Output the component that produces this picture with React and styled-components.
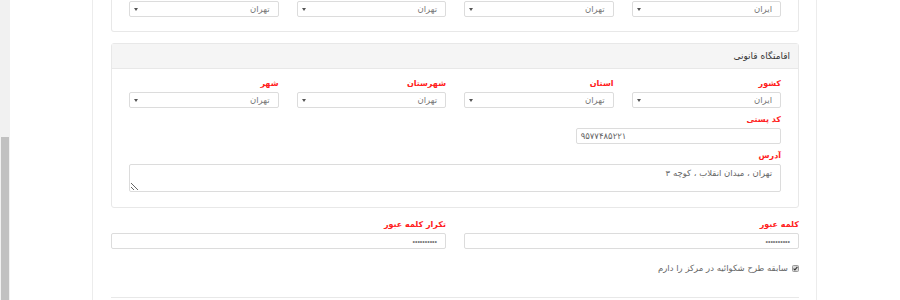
import styled, { createGlobalStyle } from "styled-components";

const GlobalStyle = createGlobalStyle`
  html, body {
    margin: 0;
    padding: 0;
    height: 100%;
    overflow: hidden;
    background: #fff;
  }
  body {
    font-family: "DejaVu Sans", "Noto Sans", sans-serif;
  }
`;

const Shell = styled.div`
  display: flex;
  height: 100vh;
`;

// fake scrollbar on the left side (rtl page)
const ScrollTrack = styled.div`
  width: 10px;
  background: #f1f1f1;
  padding: 0 1px;
  box-sizing: border-box;
  display: flex;
  flex-direction: column;
`;

const Thumb = styled.div`
  margin-top: 137px;
  flex: 1;
  background: #c1c1c1;
`;

const Main = styled.div`
  flex: 1;
  padding-left: 82px;
`;

const Container = styled.div`
  width: 725px;
  height: 100%;
  box-sizing: border-box;
  border-left: 1px solid #ececec;
  border-right: 1px solid #ececec;
  padding: 0 17px 0 18px;
  direction: rtl;
`;

const CutPanel = styled.div`
  border: 1px solid #e8e8e8;
  border-top: none;
  border-radius: 0 0 3px 3px;
  padding: 1px 17px 14px;
`;

const Panel = styled.div`
  margin-top: 11px;
  border: 1px solid #e8e8e8;
  border-radius: 3px;
`;

const PanelHeader = styled.div`
  height: 24px;
  background: #f5f5f5;
  border-bottom: 1px solid #e8e8e8;
  padding: 0 8px;
  display: flex;
  align-items: center;
  font-size: 9px;
  color: #333;
`;

const PanelBody = styled.div`
  padding: 9px 17px 15px;
  display: flex;
  flex-direction: column;
  gap: 6px;
`;

const Grid = styled.div`
  display: grid;
  grid-template-columns: repeat(${(p) => p.cols}, 1fr);
  column-gap: 18px;
`;

const Field = styled.div`
  display: flex;
  flex-direction: column;
`;

const Label = styled.label`
  font-size: 8px;
  font-weight: bold;
  color: #ff2020;
  line-height: 12px;
  margin-bottom: 2px;
`;

const Box = styled.div`
  height: 16px;
  box-sizing: border-box;
  border: 1px solid #dcdcdc;
  border-radius: 2px;
  display: flex;
  align-items: center;
  font-size: 8.5px;
  color: #777;
  background: #fff;
`;

const SelectBox = styled(Box)`
  justify-content: space-between;
  padding: 0 8px 0 4px;
`;

const Arrow = styled.span`
  width: 0;
  height: 0;
  border-left: 2px solid transparent;
  border-right: 2px solid transparent;
  border-top: 3px solid #555;
`;

const NumberBox = styled(Box)`
  direction: ltr;
  padding: 0 4px;
  color: #666;
`;

const PassBox = styled(Box)`
  padding: 0 8px;
  font-family: "Liberation Sans", sans-serif;
  font-size: 7px;
  color: #777;
`;

const TextArea = styled.textarea`
  height: 28px;
  width: 100%;
  box-sizing: border-box;
  border: 1px solid #dcdcdc;
  border-radius: 2px;
  padding: 3px 8px;
  font-family: "DejaVu Sans", sans-serif;
  font-size: 8.5px;
  color: #666;
  resize: vertical;
  outline: none;
  display: block;
  margin: 0;
`;

const Section = styled.div`
  margin-top: 11px;
`;

const CheckRow = styled.div`
  margin-top: 13px;
  display: flex;
  align-items: center;
  gap: 4px;
  font-size: 8.5px;
  line-height: 12px;
  color: #666;
`;

const Divider = styled.div`
  margin-top: 23px;
  border-top: 1px solid #e8e8e8;
`;

function Select({ value }) {
  return (
    <SelectBox>
      <span>{value}</span>
      <Arrow />
    </SelectBox>
  );
}

function CheckMark() {
  return (
    <svg width="7" height="7" viewBox="0 0 7 7">
      <rect x="0.5" y="0.5" width="6" height="6" rx="1" fill="#d8d8d8" stroke="#999" />
      <path d="M1.6 3.6 L2.9 4.9 L5.4 1.9" fill="none" stroke="#333" strokeWidth="1.1" />
    </svg>
  );
}

const places = [
  { label: "کشور", value: "ایران" },
  { label: "استان", value: "تهران" },
  { label: "شهرستان", value: "تهران" },
  { label: "شهر", value: "تهران" },
];

export default function App() {
  return (
    <>
      <GlobalStyle />
      <Shell>
        <ScrollTrack>
          <Thumb />
        </ScrollTrack>
        <Main>
          <Container>
            {/* previous panel, scrolled up */}
            <CutPanel>
              <Grid cols={4}>
                {places.map((p) => (
                  <Select key={p.label} value={p.value} />
                ))}
              </Grid>
            </CutPanel>

            <Panel>
              <PanelHeader>اقامتگاه قانونی</PanelHeader>
              <PanelBody>
                <Grid cols={4}>
                  {places.map((p) => (
                    <Field key={p.label}>
                      <Label>{p.label}</Label>
                      <Select value={p.value} />
                    </Field>
                  ))}
                </Grid>
                <Grid cols={3}>
                  <Field>
                    <Label>کد پستی</Label>
                    <NumberBox>۹۵۷۷۴۸۵۲۲۱</NumberBox>
                  </Field>
                </Grid>
                <Field>
                  <Label>آدرس</Label>
                  <TextArea readOnly defaultValue="تهران ، میدان انقلاب ، کوچه ۳" />
                </Field>
              </PanelBody>
            </Panel>

            <Section>
              <Grid cols={2}>
                <Field>
                  <Label>کلمه عبور</Label>
                  <PassBox>••••••••••</PassBox>
                </Field>
                <Field>
                  <Label>تکرار کلمه عبور</Label>
                  <PassBox>••••••••••</PassBox>
                </Field>
              </Grid>
            </Section>

            <CheckRow>
              <CheckMark />
              <span>سابقه طرح شکوائیه در مرکز را دارم</span>
            </CheckRow>

            <Divider />
          </Container>
        </Main>
      </Shell>
    </>
  );
}
